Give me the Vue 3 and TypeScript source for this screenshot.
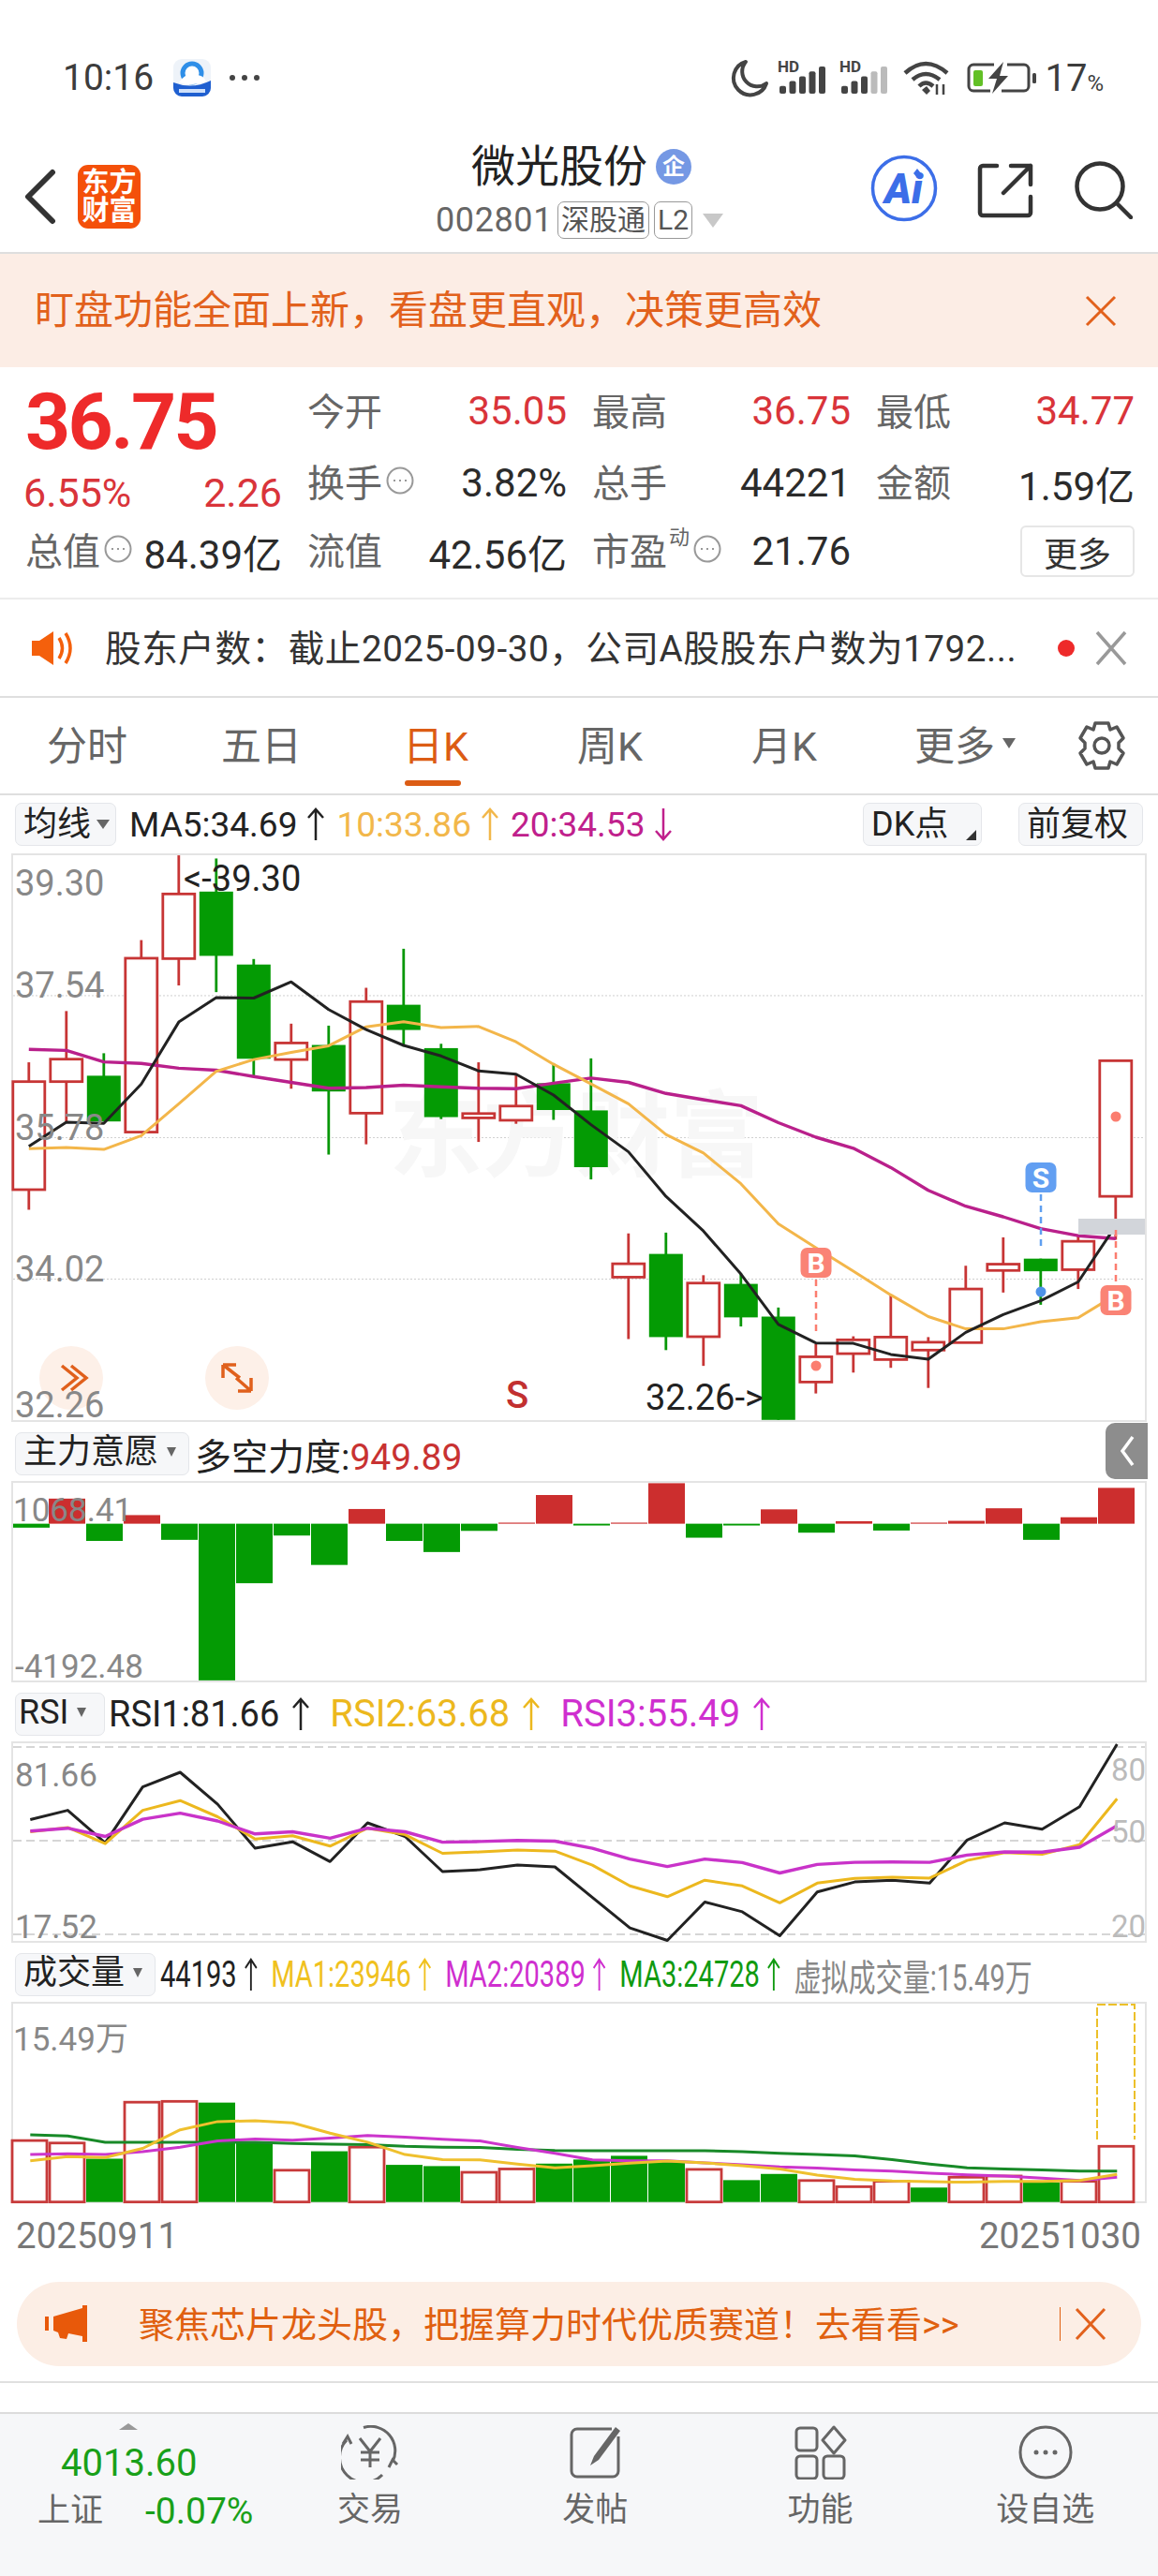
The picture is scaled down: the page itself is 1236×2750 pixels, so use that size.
<template>
  <div class="page">
    <div class="status">
      <span class="clock">10:16</span>
      <svg class="app-icon" width="40" height="40" viewBox="0 0 40 40">
        <rect width="40" height="40" rx="9" fill="#eef3f9" />
        <circle cx="20" cy="15" r="10" fill="#fff" stroke="#2f8fe8" stroke-width="5" />
        <path d="M0 25Q20 33 40 23V31a9 9 0 0 1-9 9H9a9 9 0 0 1-9-9Z" fill="#1f5fd0" />
        <path d="M6 25Q14 14 22 17Q32 16 35 24Q20 30 6 25Z" fill="#fff" />
        <rect x="6" y="32" width="28" height="4" fill="#cfe0fa" />
      </svg>
      <span class="dots"><i></i><i></i><i></i></span>
      <div class="status-right">
        <svg class="s-moon" width="40" height="40" viewBox="0 0 40 40"><path d="M16 3A18 18 0 1 0 38 26A16 16 0 0 1 16 3Z" fill="none" stroke="#444" stroke-width="4" stroke-linejoin="round" /></svg>
        <svg v-for="n in [4, 2]" :key="n" class="s-sig" width="53" height="38" viewBox="0 0 53 38">
          <text x="0" y="13" class="hd">HD</text>
          <rect v-for="b in 5" :key="b" :x="(b - 1) * 10.5 + 2" :y="36 - b * 5.2 - 3" width="7" :height="b * 5.2 + 3" rx="2" :fill="b <= n + 1 ? '#444' : '#bbb'" />
        </svg>
        <svg class="s-wifi" width="50" height="38" viewBox="0 0 50 38">
          <path d="M2 14Q24 -6 47 14M10 21Q24 9 39 21M17 28Q24 21 32 28" fill="none" stroke="#444" stroke-width="4.5" />
          <path d="M20 32L25 28L29 33L25 37Z" fill="#444" />
          <path d="M36 26V37M43 26V37" stroke="#444" stroke-width="2.5" />
        </svg>
        <svg class="s-bat" width="76" height="38" viewBox="0 0 76 38">
          <path d="M30 5H8a5 5 0 0 0-5 5V28a5 5 0 0 0 5 5H26M44 5H62a5 5 0 0 1 5 5V28a5 5 0 0 1-5 5H38" fill="none" stroke="#444" stroke-width="3" />
          <rect x="8" y="11" width="10" height="17" rx="2" fill="#62c026" />
          <path d="M40 2L24 20H33L28 36L45 17H36Z" fill="#444" />
          <rect x="71" y="14" width="4" height="11" rx="1.5" fill="#444" />
        </svg>
        <span class="batt">17<small>%</small></span>
      </div>
    </div>

    <header class="nav">
      <svg class="back" width="34" height="60" viewBox="0 0 34 60"><path d="M30 4L4 30L30 56" fill="none" stroke="#333" stroke-width="6" stroke-linecap="round" stroke-linejoin="round" /></svg>
      <div class="logo">东方<br />财富</div>
      <div class="title">
        <div class="name">微光股份<b class="qi">企</b></div>
        <div class="code">
          002801<em class="tag">深股通</em><em class="tag">L2</em><i class="tri"></i>
        </div>
      </div>
      <svg class="ai" width="72" height="72" viewBox="0 0 72 72">
        <circle cx="36" cy="36" r="33.5" fill="none" stroke="#3c6ee8" stroke-width="3.5" />
        <text x="15" y="52" class="ai-text">Ai</text>
        <path d="M50 15L54 20L50 25L46 20Z" fill="#3c6ee8" />
      </svg>
      <svg class="share" width="60" height="60" viewBox="0 0 60 60">
        <path d="M21 4H6a3 3 0 0 0-3 3V54a3 3 0 0 0 3 3H54a3 3 0 0 0 3-3V37M36 4H57V24M57 4L28 33" fill="none" stroke="#333" stroke-width="4.5" stroke-linecap="round" stroke-linejoin="round" />
      </svg>
      <svg class="search" width="62" height="62" viewBox="0 0 62 62">
        <circle cx="27" cy="27" r="24.5" fill="none" stroke="#333" stroke-width="4.5" />
        <path d="M45 45L60 60" stroke="#333" stroke-width="4.5" stroke-linecap="round" />
      </svg>
    </header>

    <div class="banner">
      <span class="banner-text">盯盘功能全面上新，看盘更直观，决策更高效</span>
      <svg width="34" height="34" viewBox="0 0 34 34"><path d="M2 2L32 32M32 2L2 32" stroke="#e2611c" stroke-width="3" /></svg>
    </div>

    <section class="stats">
      <div class="cell big">36.75</div>
      <div v-for="s in statsTop" :key="s.label" class="cell">
        <span class="lbl">{{ s.label }}</span><span class="val red">{{ s.value }}</span>
      </div>

      <div class="cell pct red"><span>6.55%</span><span>2.26</span></div>
      <div v-for="s in statsMid" :key="s.label" class="cell">
        <span class="lbl">{{ s.label }}<svg v-if="s.info" class="info" viewBox="0 0 30 30"><circle cx="15" cy="15" r="13.5" /><path d="M8 15h2M14 15h2M20 15h2" /></svg></span><span class="val">{{ s.value }}</span>
      </div>

      <div class="cell">
        <span class="lbl">总值<svg class="info" viewBox="0 0 30 30"><circle cx="15" cy="15" r="13.5" /><path d="M8 15h2M14 15h2M20 15h2" /></svg></span><span class="val">84.39亿</span>
      </div>
      <div class="cell"><span class="lbl">流值</span><span class="val">42.56亿</span></div>
      <div class="cell">
        <span class="lbl">市盈<sup>动</sup><svg class="info" viewBox="0 0 30 30"><circle cx="15" cy="15" r="13.5" /><path d="M8 15h2M14 15h2M20 15h2" /></svg></span><span class="val">21.76</span>
      </div>
      <div class="cell end"><button class="more">更多</button></div>
    </section>

    <div class="notice">
      <svg width="46" height="38" viewBox="0 0 46 38">
        <path d="M1 11H9L24 1V37L9 27H1Z" fill="#f4600c" />
        <path d="M30 8Q37 19 30 30M37 3Q47 19 37 35" fill="none" stroke="#f4600c" stroke-width="3.5" />
      </svg>
      <span class="notice-text">股东户数：截止2025-09-30，公司A股股东户数为1792...</span>
      <i class="red-dot"></i>
      <svg width="34" height="38" viewBox="0 0 34 38"><path d="M2 2L32 36M32 2L2 36" stroke="#999" stroke-width="3.5" /></svg>
    </div>

    <nav class="tabs">
      <span v-for="t in tabs" :key="t" class="tab" :class="{ active: t === '日K' }">{{ t }}</span>
      <span class="tab tab-more">更多<i class="tab-tri"></i></span>
      <span class="gear">
        <svg width="52" height="54" viewBox="0 0 52 54">
          <path d="M19 3H33L35 10L42 7L49 19L44 24V30L49 35L42 47L35 44L33 51H19L17 44L10 47L3 35L8 30V24L3 19L10 7L17 10Z" fill="none" stroke="#555" stroke-width="3.5" stroke-linejoin="round" />
          <circle cx="26" cy="27" r="8" fill="none" stroke="#555" stroke-width="3.5" />
        </svg>
      </span>
    </nav>

    <div class="legend-row">
      <button class="pick w-ma">均线<i class="pick-tri"></i></button>
      <div class="legend ma">
        <span v-for="l in maLegend" :key="l.text" class="item" :style="{ color: l.color }">
          {{ l.text }}
          <svg class="arr" :class="{ flip: l.down }" viewBox="0 0 20 36"><path d="M10 35V2M2 11L10 2L18 11" /></svg>
        </span>
      </div>
      <button class="pick dk">DK点<i class="corner"></i></button>
      <button class="pick fq">前复权</button>
    </div>

    <div class="panel k-panel">
      <svg width="1208" height="603" viewBox="0 0 1208 603">
        <line v-for="g in kGrid" :key="g" x1="0" x2="1208" :y1="g" :y2="g" class="dotted" />
        <text x="401" y="335" class="watermark">东方财富</text>
        <g v-for="(c, i) in kCandles" :key="i">
          <line :x1="c.x" :x2="c.x" :y1="c.hi" :y2="c.lo" :stroke="c.up ? '#c73535' : '#089708'" stroke-width="2.8" />
          <rect v-if="c.up" :x="c.x - 17" :y="c.top" width="34" :height="c.h" fill="#fff" stroke="#c73535" stroke-width="2.8" />
          <rect v-else :x="c.x - 18" :y="c.top" width="36" :height="c.h" fill="#049b04" />
        </g>
        <polyline :points="kLines.ma20" class="ln thick" stroke="#b9208b" />
        <polyline :points="kLines.ma10" class="ln" stroke="#f3b64a" />
        <polyline :points="kLines.ma5" class="ln" stroke="#222" />

        <rect x="1137" y="388" width="71" height="17" fill="#d2d5da" />
        <text x="182" y="38" class="note">&lt;-39.30</text>
        <text x="675" y="592" class="note">32.26-&gt;</text>

        <circle cx="62" cy="558" r="34" fill="#fdf0e8" />
        <path d="M52 545L68 558L52 571M62 545L78 558L62 571" fill="none" stroke="#e0601c" stroke-width="3.5" />
        <circle cx="239" cy="558" r="34" fill="#fdf0e8" />
        <path d="M224 544L242 558M224 544V558M224 544H238M254 572L238 558M254 572V558M254 572H240" fill="none" stroke="#e0601c" stroke-width="3.5" />
        <text v-for="l in kLabels" :key="l.text" x="2" :y="l.y" class="axis">{{ l.text }}</text>
        <text x="526" y="590" class="s-mark">S</text>

        <line x1="857" x2="857" y1="453" y2="512" class="dash red-dash" />
        <circle cx="857" cy="545" r="5.5" fill="#fb7d6f" />
        <rect x="840.5" y="419" width="33" height="32" rx="7" fill="#fa8375" />
        <text x="857" y="446" class="flag">B</text>

        <line x1="1097" x2="1097" y1="362" y2="419" class="dash blue-dash" />
        <circle cx="1097" cy="466" r="5.5" fill="#4e92e8" />
        <rect x="1080.5" y="328" width="33" height="32" rx="7" fill="#629ff2" />
        <text x="1097" y="355" class="flag">S</text>

        <line x1="1177" x2="1177" y1="400" y2="460" class="dash red-dash" />
        <circle cx="1177" cy="279" r="5.5" fill="#fb7d6f" />
        <rect x="1160.5" y="459" width="33" height="32" rx="7" fill="#fa8375" />
        <text x="1177" y="486" class="flag">B</text>
      </svg>
    </div>

    <div class="legend-row sub">
      <button class="pick w-zl">主力意愿<i class="pick-tri small"></i></button>
      <span class="sub-text">多空力度:<b>949.89</b></span>
      <span class="collapse">
        <svg width="16" height="34" viewBox="0 0 16 34"><path d="M14 2L3 17L14 32" fill="none" stroke="#fff" stroke-width="3.5" /></svg>
      </span>
    </div>

    <div class="panel short">
      <svg width="1208" height="211" viewBox="0 0 1208 211">
        <rect v-for="(b, i) in flowBars" :key="i" :x="b.x" :y="b.y" width="39" :height="b.h" :fill="b.up ? '#cc2e2e' : '#049b04'" />
        <text x="0" y="41" class="axis small">1068.41</text>
        <text x="2" y="208" class="axis small">-4192.48</text>
      </svg>
    </div>

    <div class="legend-row sub">
      <button class="pick w-rsi">RSI<i class="pick-tri small"></i></button>
      <div class="legend rsi">
        <span v-for="l in rsiLegend" :key="l.text" class="item" :style="{ color: l.color }">
          {{ l.text }}
          <svg class="arr" viewBox="0 0 20 36"><path d="M10 35V2M2 11L10 2L18 11" /></svg>
        </span>
      </div>
    </div>

    <div class="panel short">
      <svg width="1208" height="211" viewBox="0 0 1208 211">
        <line v-for="g in [4, 104, 204]" :key="g" x1="0" x2="1208" :y1="g" :y2="g" class="dashed" />
        <polyline :points="rsiLines[0]" class="ln" stroke="#222" />
        <polyline :points="rsiLines[1]" class="ln" stroke="#ecb81e" />
        <polyline :points="rsiLines[2]" class="ln thick" stroke="#c933c9" />
        <text x="2" y="46" class="axis small">81.66</text>
        <text x="2" y="208" class="axis small">17.52</text>
        <text x="1172" y="40" class="axis side">80</text>
        <text x="1172" y="106" class="axis side">50</text>
        <text x="1172" y="207" class="axis side">20</text>
      </svg>
    </div>

    <div class="legend-row sub">
      <button class="pick w-vol">成交量<i class="pick-tri small"></i></button>
      <div class="legend vol">
        <span v-for="l in volLegend" :key="l.text" class="item" :style="{ color: l.color }">
          {{ l.text }}
          <svg class="arr" viewBox="0 0 20 36"><path d="M10 35V2M2 11L10 2L18 11" /></svg>
        </span>
        <span class="item virtual">虚拟成交量:15.49万</span>
      </div>
    </div>

    <div class="panel short">
      <svg width="1208" height="211" viewBox="0 0 1208 211">
        <g v-for="(b, i) in volBars" :key="i">
          <rect v-if="b.up" :x="b.x + 1" :y="b.y" width="37" :height="b.h" fill="#fff" stroke="#c73a3a" stroke-width="2.8" />
          <rect v-else :x="b.x" :y="b.y" width="39" :height="b.h" fill="#049b04" />
        </g>
        <path d="M1157 145V1H1197V145" fill="none" stroke="#ecc02a" stroke-width="2" stroke-dasharray="9 3" />
        <polyline :points="volLines[2]" class="ln" stroke="#188a28" />
        <polyline :points="volLines[1]" class="ln" stroke="#cc35cc" />
        <polyline :points="volLines[0]" class="ln" stroke="#efc02e" />
        <text x="0" y="50" class="axis small">15.49万</text>
      </svg>
    </div>

    <div class="dates"><span>20250911</span><span>20251030</span></div>

    <div class="ad-wrap">
      <div class="ad">
        <svg width="46" height="40" viewBox="0 0 46 40">
          <rect x="1" y="12" width="4" height="15" fill="#e8590a" />
          <path d="M10 12L41 3V0H46V39H41V33L26 30L24 36L17 35L15 29L10 27Z" fill="#e8590a" />
        </svg>
        <span class="ad-text">聚焦芯片龙头股，把握算力时代优质赛道！去看看&gt;&gt;</span>
        <i class="ad-sep"></i>
        <svg width="34" height="36" viewBox="0 0 34 36"><path d="M2 2L32 34M32 2L2 34" stroke="#e2611c" stroke-width="3" /></svg>
      </div>
    </div>

    <footer class="bottom">
      <div class="index">
        <i class="up-tri"></i>
        <div class="index-val">4013.60</div>
        <div class="index-row"><span class="index-name">上证</span><span>-0.07%</span></div>
      </div>
      <div class="bt">
        <svg width="62" height="58" viewBox="0 0 62 58">
          <path d="M24 2.5A26 26 0 0 1 55 39M51 45L55 37L60 42M6 16A26 26 0 0 0 44 53M2 20L7 12L11 20" fill="none" stroke="#666" stroke-width="3" />
          <path d="M20 14L31 28L42 14M31 28V45M21 29H41M21 37H41" fill="none" stroke="#666" stroke-width="3" />
        </svg>
        <span>交易</span>
      </div>
      <div class="bt">
        <svg width="56" height="58" viewBox="0 0 56 58">
          <path d="M46 4H9a6 6 0 0 0-6 6V49a6 6 0 0 0 6 6H47a6 6 0 0 0 6-6V12" fill="none" stroke="#666" stroke-width="3" />
          <path d="M50 2L55 6L32 37L23 43L27 33Z" fill="#666" />
        </svg>
        <span>发帖</span>
      </div>
      <div class="bt">
        <svg width="56" height="58" viewBox="0 0 56 58" fill="none" stroke="#666" stroke-width="3">
          <rect x="2" y="3" width="22" height="24" rx="4" />
          <path d="M42 2L54 16L42 30L30 16Z" stroke-linejoin="round" />
          <rect x="2" y="33" width="22" height="24" rx="4" />
          <rect x="31" y="33" width="22" height="24" rx="4" />
        </svg>
        <span>功能</span>
      </div>
      <div class="bt">
        <svg width="58" height="58" viewBox="0 0 58 58">
          <circle cx="29" cy="29" r="27" fill="none" stroke="#666" stroke-width="3" />
          <circle cx="19" cy="29" r="2.5" fill="#666" /><circle cx="29" cy="29" r="2.5" fill="#666" /><circle cx="39" cy="29" r="2.5" fill="#666" />
        </svg>
        <span>设自选</span>
      </div>
    </footer>
  </div>
</template>

<script setup lang="ts">
interface Legend {
  text: string;
  color: string;
  down?: boolean;
}

const statsTop = [
  { label: '今开', value: '35.05' },
  { label: '最高', value: '36.75' },
  { label: '最低', value: '34.77' },
];
const statsMid = [
  { label: '换手', value: '3.82%', info: true },
  { label: '总手', value: '44221', info: false },
  { label: '金额', value: '1.59亿', info: false },
];
const tabs = ['分时', '五日', '日K', '周K', '月K'];

const maLegend: Legend[] = [
  { text: 'MA5:34.69', color: '#222' },
  { text: '10:33.86', color: '#f2b74a' },
  { text: '20:34.53', color: '#c0208c', down: true },
];
const rsiLegend: Legend[] = [
  { text: 'RSI1:81.66', color: '#222' },
  { text: 'RSI2:63.68', color: '#ecb81e' },
  { text: 'RSI3:55.49', color: '#cf2fcf' },
];
const volLegend: Legend[] = [
  { text: '44193', color: '#222' },
  { text: 'MA1:23946', color: '#f0c11e' },
  { text: 'MA2:20389', color: '#cf2fcf' },
  { text: 'MA3:24728', color: '#109a10' },
];

// values read off the chart, in its own vertical scale
const kY = (v: number) => (v - 120) / 2.376 - 2;
const cx = (i: number) => 16.8 + 40 * i;

const rawCandles: [number, number, number, number, boolean][] = [
  [650, 699, 973, 1024, true],
  [520, 642, 699, 800, true],
  [627, 684, 800, 800, false],
  [340, 386, 827, 827, true],
  [125, 223, 387, 455, true],
  [133, 217, 380, 472, false],
  [388, 402, 641, 684, false],
  [552, 601, 643, 717, true],
  [557, 606, 724, 884, false],
  [461, 496, 779, 858, true],
  [362, 504, 568, 610, false],
  [603, 614, 789, 794, false],
  [650, 780, 791, 852, true],
  [680, 761, 797, 806, true],
  [652, 703, 771, 796, false],
  [640, 772, 916, 947, false],
  [1084, 1161, 1195, 1352, true],
  [1082, 1136, 1347, 1380, false],
  [1190, 1210, 1346, 1420, true],
  [1185, 1212, 1297, 1320, false],
  [1272, 1295, 1557, 1557, false],
  [1365, 1397, 1461, 1490, true],
  [1345, 1354, 1389, 1437, true],
  [1240, 1347, 1404, 1425, true],
  [1347, 1360, 1380, 1476, true],
  [1166, 1225, 1361, 1361, true],
  [1094, 1162, 1178, 1234, true],
  [1148, 1148, 1180, 1265, false],
  [1090, 1104, 1176, 1225, true],
  [646, 646, 990, 1100, true],
];

const kCandles = rawCandles.map(([hi, top, bot, lo, up], i) => ({
  x: cx(i),
  hi: kY(hi),
  lo: kY(lo),
  top: kY(top),
  h: kY(bot) - kY(top),
  up,
}));

const kGrid = [481, 841, 1200].map(kY);
const kLabels = [
  { text: '39.30', y: 43 },
  { text: '37.54', y: 152 },
  { text: '35.78', y: 304 },
  { text: '34.02', y: 455 },
  { text: '32.26', y: 600 },
];

function points(values: number[], toY: (v: number) => number, x0: number): string {
  return values.map((v, i) => `${x0 + 40 * i},${toY(v).toFixed(1)}`).join(' ');
}

const kLines = {
  ma5: points(
    [863, 802, 805, 705, 548, 486, 487, 446, 516, 567, 607, 634, 672, 680, 733, 808, 877, 990, 1078, 1187, 1315, 1362, 1363, 1391, 1403, 1335, 1290, 1255, 1207, 1065],
    kY,
    16.8,
  ),
  ma10: points(
    [869, 866, 871, 836, 755, 673, 643, 625, 608, 560, 547, 562, 559, 598, 655, 705, 755, 833, 880, 958, 1060, 1120, 1180, 1240, 1295, 1326, 1326, 1308, 1298, 1240],
    kY,
    16.8,
  ),
  ma20: points(
    [617, 620, 649, 653, 665, 670, 686, 701, 716, 714, 708, 712, 716, 717, 703, 690, 701, 729, 745, 760, 803, 840, 868, 917, 975, 1015, 1042, 1072, 1090, 1097],
    kY,
    16.8,
  ),
};

const flowY = (v: number) => (v - 208) / 2.613;
const flowBase = 322;
const flowValues: number[] = [
  333, 252, 370, 298, 367, 759, 488, 355, 437, 281, 370, 401, 342, 319, 242,
  327, 319, 209, 361, 327, 282, 347, 315, 341, 319, 314, 279, 367, 304, 222,
];
const flowBars = flowValues.map((v, i) => {
  const a = Math.min(v, flowBase);
  const b = Math.max(v, flowBase);
  return { x: i === 0 ? 0 : -2 + 40 * i, y: flowY(a), h: flowY(b) - flowY(a), up: v < flowBase };
});

const rsiY = (v: number) => (v - 935) / 2.613;
const rsiLines = [
  [1148, 1122, 1213, 1057, 1016, 1105, 1228, 1210, 1265, 1157, 1195, 1293, 1288, 1275, 1280, 1365, 1450, 1485, 1378, 1405, 1472, 1350, 1322, 1317, 1325, 1205, 1157, 1175, 1112, 938],
  [1182, 1170, 1215, 1122, 1095, 1140, 1202, 1193, 1222, 1172, 1190, 1242, 1238, 1233, 1236, 1275, 1333, 1363, 1317, 1333, 1380, 1325, 1312, 1309, 1311, 1262, 1240, 1245, 1218, 1090],
  [1180, 1172, 1195, 1147, 1130, 1152, 1188, 1182, 1200, 1172, 1182, 1211, 1209, 1206, 1208, 1228, 1258, 1279, 1258, 1268, 1297, 1273, 1267, 1266, 1267, 1247, 1238, 1239, 1225, 1165],
].map((line) => points(line, rsiY, 18.3));

const volY = (v: number) => (v - 174) / 2.272;
const volBase = volY(655);
const rawVol: [number, boolean][] = [
  [506, true], [512, true], [550, false], [413, true], [411, true], [414, false],
  [510, false], [578, true], [532, false], [522, true], [565, false], [568, false],
  [583, true], [575, true], [562, false], [552, false], [543, false], [557, false],
  [576, true], [602, false], [587, false], [603, true], [618, true], [605, true],
  [620, false], [595, true], [592, true], [608, false], [605, true], [520, true],
];
const volBars = rawVol.map(([v, up], i) => ({
  x: -2 + 40 * i,
  y: volY(v),
  h: volBase - volY(v),
  up,
}));
const volLines = [
  [555, 545, 547, 525, 480, 460, 458, 463, 488, 510, 540, 552, 553, 563, 572, 567, 561, 556, 560, 567, 575, 590, 600, 604, 606, 607, 605, 605, 603, 588],
  [540, 538, 540, 533, 522, 507, 502, 505, 500, 494, 498, 503, 507, 523, 537, 553, 555, 555, 560, 565, 570, 573, 577, 580, 585, 589, 592, 597, 603, 595],
  [492, 495, 510, 510, 510, 510, 510, 513, 515, 516, 520, 522, 523, 527, 530, 531, 531, 531, 531, 533, 537, 540, 543, 552, 563, 572, 575, 577, 580, 580],
].map((line) => points(line, volY, 18.3));
</script>

<style>
html,
body {
  background: #fff;
}
</style>

<style scoped>
.page {
  width: 1236px;
  height: 2750px;
  overflow: hidden;
  background: #fff;
  color: #222;
  font-family: Roboto, "Noto Sans CJK SC", sans-serif;
}

button {
  font-family: inherit;
}

/* status bar */
.status {
  height: 150px;
  display: flex;
  align-items: center;
  padding: 16px 58px 0 67px;
  box-sizing: border-box;
}
.clock {
  font-size: 39px;
  color: #3c3c3c;
}
.app-icon {
  margin-left: 21px;
}
.dots {
  display: flex;
  gap: 7px;
  margin-left: 20px;
}
.dots i {
  width: 6px;
  height: 6px;
  border-radius: 50%;
  background: #444;
}
.status-right {
  margin-left: auto;
  display: flex;
  align-items: center;
}
.status-right svg {
  overflow: visible;
}
.s-sig {
  margin-left: 10px;
}
.s-sig + .s-sig {
  margin-left: 13px;
}
.s-wifi {
  margin-left: 15px;
}
.s-bat {
  margin-left: 17px;
}
.hd {
  font-size: 17px;
  font-weight: 700;
  fill: #444;
}
.batt {
  font-size: 40px;
  color: #3c3c3c;
  margin-left: 8px;
}
.batt small {
  font-size: 24px;
}

/* nav */
.nav {
  height: 121px;
  position: relative;
  display: flex;
  align-items: center;
  box-sizing: border-box;
  border-bottom: 2px solid #dedede;
}
.back {
  margin-left: 26px;
}
.logo {
  margin-left: 23px;
  width: 67px;
  height: 68px;
  border-radius: 11px;
  background: #f4500a;
  color: #fff;
  font-size: 29px;
  line-height: 30px;
  font-weight: 700;
  text-align: center;
  padding-top: 4px;
  box-sizing: border-box;
  white-space: nowrap;
}
.title {
  position: absolute;
  left: 465px;
  top: 0;
}
.name {
  font-size: 47px;
  line-height: 56px;
  padding: 0 0 0 38px;
  display: flex;
  align-items: center;
  color: #222;
}
.qi {
  width: 38px;
  height: 38px;
  margin-left: 9px;
  border-radius: 50%;
  background: #7598e4;
  color: #fff;
  font-size: 24px;
  font-weight: 700;
  line-height: 38px;
  text-align: center;
}
.code {
  margin-top: 8px;
  display: flex;
  align-items: center;
  font-size: 36px;
  color: #666;
  letter-spacing: 0.6px;
}
.tag {
  font-style: normal;
  font-size: 30px;
  line-height: 38px;
  height: 38px;
  padding: 0 3px;
  margin-left: 5px;
  border: 1px solid #999;
  border-radius: 7px;
  color: #555;
  letter-spacing: 0;
}
.tri {
  margin-left: 11px;
  border: 11px solid transparent;
  border-top: 15px solid #c8c8c8;
  border-bottom: 0;
}
.ai {
  position: absolute;
  left: 929px;
  top: 15px;
}
.ai-text {
  font-size: 44px;
  font-weight: 900;
  font-style: italic;
  fill: #3c6ee8;
}
.share {
  position: absolute;
  left: 1043px;
  top: 23px;
}
.search {
  position: absolute;
  left: 1147px;
  top: 22px;
}

.banner {
  height: 121px;
  background: #fcede5;
  display: flex;
  align-items: center;
  justify-content: space-between;
  padding: 0 44px 0 37px;
  font-size: 42px;
  color: #e2611c;
}
.banner-text {
  margin-top: -8px;
}

/* stats */
.stats {
  height: 248px;
  box-sizing: border-box;
  border-bottom: 2px solid #ececec;
  padding: 8px 0 0 27px;
  display: grid;
  grid-template-columns: 274px 277px 276px 276px;
  grid-template-rows: 77px 76px 70px;
  column-gap: 27px;
}
.cell {
  display: flex;
  align-items: center;
  justify-content: space-between;
  white-space: nowrap;
}
.lbl {
  font-size: 40px;
  color: #666;
  display: flex;
  align-items: center;
  margin-top: -4px;
}
.lbl sup {
  font-size: 22px;
  line-height: 1;
  margin: -24px 0 0 2px;
}
.val {
  font-size: 42px;
  color: #2b2b2b;
}
.red {
  color: #d9343a;
}
.big {
  font-size: 84px;
  line-height: 1;
  font-weight: 700;
  color: #ee2a2a;
  letter-spacing: -2.6px;
  margin-top: 24px;
}
.pct {
  font-size: 43px;
  margin: 22px 0 0 -2px;
}
.info {
  width: 30px;
  height: 30px;
  margin-left: 4px;
  fill: none;
  stroke: #999;
  stroke-width: 2;
}
.end {
  justify-content: flex-end;
}
.more {
  width: 122px;
  height: 55px;
  padding: 0;
  background: #fff;
  border: 2px solid #e6e6e6;
  border-radius: 6px;
  font-size: 36px;
  color: #333;
}

/* notice */
.notice {
  height: 105px;
  box-sizing: border-box;
  border-bottom: 2px solid #dfdfdf;
  display: flex;
  align-items: center;
  padding-left: 33px;
}
.notice-text {
  margin: -6px 0 0 33px;
  font-size: 38.6px;
  letter-spacing: 0.55px;
  color: #333;
  white-space: nowrap;
  width: 1017px;
}
.red-dot {
  width: 18px;
  height: 18px;
  border-radius: 50%;
  background: #ee2a2a;
  margin-right: 22px;
}

/* tabs */
.tabs {
  height: 104px;
  box-sizing: border-box;
  border-bottom: 2px solid #dfdfdf;
  display: grid;
  grid-template-columns: repeat(6, 186px) 120px;
  align-items: center;
}
.tab {
  position: relative;
  height: 100%;
  box-sizing: border-box;
  padding-bottom: 6px;
  display: flex;
  align-items: center;
  justify-content: center;
  font-size: 43px;
  color: #666;
}
.tab.active {
  color: #dc5c14;
}
.tab.active::after {
  content: "";
  position: absolute;
  left: 60px;
  bottom: 8px;
  width: 60px;
  height: 6px;
  border-radius: 3px;
  background: #dc5c14;
}
.tab-more {
  padding-left: 14px;
}
.tab-tri {
  margin-left: 8px;
  border: 7px solid transparent;
  border-top: 11px solid #666;
  border-bottom: 0;
}
.gear {
  display: flex;
  justify-content: center;
}

/* legend rows */
.legend-row {
  height: 62px;
  display: flex;
  align-items: center;
  padding: 0 16px;
  box-sizing: border-box;
  white-space: nowrap;
}
.legend-row.sub {
  height: 63px;
  position: relative;
  padding-top: 4px;
}
.pick {
  height: 46px;
  padding: 0 0 1px 8px;
  display: flex;
  align-items: center;
  flex: none;
  background: #f6f7f9;
  border: 1px solid #e4e6ea;
  border-radius: 7px;
  font-size: 36px;
  line-height: 1;
  color: #222;
}
.sub .pick {
  padding-bottom: 4px;
}
.w-ma {
  width: 108px;
}
.w-zl {
  width: 186px;
}
.w-rsi {
  width: 96px;
  padding-left: 3px;
}
.w-vol {
  width: 150px;
}
.pick-tri {
  margin-left: 6px;
  border: 7px solid transparent;
  border-top: 10px solid #666;
  border-bottom: 0;
}
.pick-tri.small {
  border-width: 10px 5px 0;
  margin-left: 9px;
}
.dk {
  margin-left: auto;
  width: 127px;
  position: relative;
}
.corner {
  position: absolute;
  right: 5px;
  bottom: 5px;
  border-left: 11px solid transparent;
  border-bottom: 11px solid #333;
}
.fq {
  margin-left: 39px;
  width: 133px;
}
.legend {
  display: flex;
  align-items: center;
  flex: none;
}
.item {
  display: flex;
  align-items: center;
}
.arr {
  width: 20px;
  height: 36px;
  fill: none;
  stroke: currentColor;
  stroke-width: 2.5;
}
.arr.flip {
  transform: rotate(180deg);
}
.legend.ma {
  margin-left: 14px;
  font-size: 37px;
}
.legend.ma .item {
  gap: 10px;
  margin-right: 12px;
}
.legend.rsi {
  margin-left: 4px;
  font-size: 38px;
}
.legend.rsi .item {
  gap: 13px;
  margin-right: 21px;
}
.legend.rsi .item + .item {
  font-size: 40px;
}
.legend.vol {
  margin-left: 5px;
  font-size: 39px;
  transform: scaleX(0.745);
  transform-origin: 0 50%;
}
.legend.vol .item {
  gap: 10px;
  margin-right: 19px;
}
.virtual {
  color: #888;
}
.sub-text {
  margin-left: 6px;
  font-size: 39px;
  color: #222;
}
.sub-text b {
  font-weight: 400;
  font-size: 39px;
  color: #c83232;
}
.collapse {
  position: absolute;
  right: 11px;
  top: 1px;
  width: 45px;
  height: 60px;
  background: #8d8d8d;
  border-radius: 10px 0 0 10px;
  display: flex;
  align-items: center;
  justify-content: center;
}

/* charts */
.panel {
  width: 1212px;
  margin-left: 12px;
  box-sizing: border-box;
  border: 2px solid #e4e4e4;
  background: #fff;
}
.panel svg {
  display: block;
  overflow: visible;
}
.k-panel {
  height: 607px;
}
.short {
  height: 215px;
}
.dotted {
  stroke: #cfcfcf;
  stroke-width: 1;
  stroke-dasharray: 2 2;
}
.dashed {
  stroke: #c9c9c9;
  stroke-width: 1.5;
  stroke-dasharray: 9 5;
}
.watermark {
  font-size: 100px;
  font-weight: 700;
  fill: #f7f7f7;
}
.ln {
  fill: none;
  stroke-width: 3;
  stroke-linejoin: round;
}
.ln.thick {
  stroke-width: 3.4;
}
.axis {
  font-size: 38px;
  fill: #888;
}
.axis.small {
  font-size: 35px;
}
.axis.side {
  font-size: 33px;
  fill: #bbb;
}
.note {
  font-size: 38px;
  fill: #222;
}
.s-mark {
  font-size: 40px;
  font-weight: 500;
  fill: #c23030;
}
.flag {
  font-size: 30px;
  font-weight: 700;
  fill: #fff;
  text-anchor: middle;
}
.dash {
  stroke-width: 2.5;
  stroke-dasharray: 7 5;
}
.red-dash {
  stroke: #fb7d6f;
}
.blue-dash {
  stroke: #5f9ff0;
}

.dates {
  height: 69px;
  display: flex;
  align-items: center;
  justify-content: space-between;
  padding: 0 18px 0 17px;
  font-size: 38.5px;
  color: #777;
}

/* ad */
.ad-wrap {
  height: 123px;
  box-sizing: border-box;
  border-bottom: 2px solid #e0e0e0;
  padding: 15px 18px 0;
}
.ad {
  height: 90px;
  border-radius: 45px;
  background: #fceee5;
  display: flex;
  align-items: center;
  padding-left: 29px;
  font-size: 38px;
  color: #e0600f;
}
.ad-text {
  margin: -6px 0 0 55px;
  width: 983px;
  white-space: nowrap;
}
.ad-sep {
  width: 1px;
  height: 36px;
  background: #e0600f;
}
.ad svg:last-child {
  margin-left: 15px;
}

/* bottom bar */
.bottom {
  margin-top: 31px;
  height: 176px;
  box-sizing: border-box;
  border-top: 2px solid #dcdcdc;
  background: #f6f7f9;
  display: grid;
  grid-template-columns: 275px repeat(4, 1fr);
}
.index {
  position: relative;
  padding: 30px 0 0 40px;
  color: #19a019;
}
.up-tri {
  position: absolute;
  left: 127px;
  top: 10px;
  border: 10px solid transparent;
  border-bottom: 7px solid #999;
  border-top: 0;
}
.index-val {
  font-size: 40px;
  line-height: 46px;
  margin-left: 25px;
}
.index-row {
  margin-top: 5px;
  display: flex;
  align-items: center;
  gap: 45px;
  font-size: 39px;
  line-height: 46px;
}
.index-name {
  color: #666;
  font-size: 35px;
}
.bt {
  display: flex;
  flex-direction: column;
  align-items: center;
  padding-top: 12px;
  font-size: 35px;
  color: #666;
}
.bt span {
  margin-top: 8px;
  line-height: 50px;
}
</style>
